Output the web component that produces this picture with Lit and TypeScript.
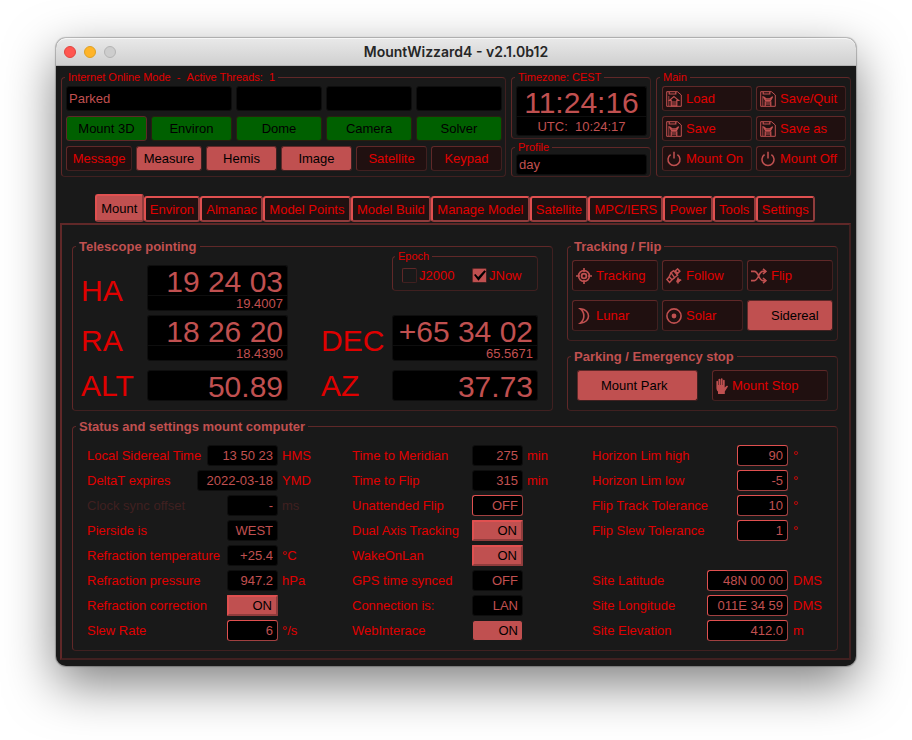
import { LitElement, html, svg, css, nothing } from "lit";
import { customElement, property, state } from "lit/decorators.js";
import { classMap } from "lit/directives/class-map.js";

const floppyFrame = svg`
  <path d="M.7 .7H11.4L15.3 4V15.3H.7Z" />
  <path d="M3.2 1V3H9.8V1" stroke-width="1.2" />
  <path d="M2.8 15V5" stroke-width="0.8" />`;

const icons: Record<string, unknown> = {
  load: svg`${floppyFrame}
    <path d="M8 5.6 12.6 9.4H10.8V14.8H5.2V9.4H3.4Z" stroke-width="1.2" />
    <path d="M5.5 11H10.5M5.5 13H10.5" />`,
  save: svg`${floppyFrame}
    <path d="M3.4 5.6 6 7.8H10L12.6 5.6 10.6 9.4H5.4Z" stroke-width="1.2" />
    <path d="M5.2 15V10.8H10.8V15M5.5 13H10.5" stroke-width="1.2" />`,
  power: svg`
    <path d="M4.6 3.6A6 6 0 1 0 11.4 3.6" stroke-width="1.5" />
    <path d="M8 .8V7.4" stroke-width="1.5" />`,
  target: svg`
    <circle cx="8" cy="8" r="5.4" stroke-width="1.6" />
    <circle cx="8" cy="8" r="2.4" stroke-width="1.8" />
    <path d="M8 0V4M8 12V16M0 8H4M12 8H16" stroke-width="1.6" />`,
  satellite: svg`
    <path d="M9.2 3 11.6 .9 13.8 3.2 11.6 5.4Z" stroke-width="1.5" />
    <path d="M5 4.6 7.6 2.6 11.6 7.2 8.6 9.6Z" stroke-width="1.4" />
    <path d="M.9 11.4 3.2 8.8 6 11.8 3.6 14.4Z" stroke-width="1.5" />
    <path d="M5 4.6 3.2 8.8M6 11.8 8.6 9.6M12 9.4V15.4M10.4 13.8 15.2 11.8" stroke-width="1.5" />
    <circle cx="12.4" cy="12.4" r="1.8" class="solid" />`,
  shuffle: svg`
    <path d="M0 3.4H3.4C7.6 3.4 7.6 12.6 11.8 12.6H15M0 12.6H3.4C7.6 12.6 7.6 3.4 11.8 3.4H15" stroke-width="1.6" />
    <path d="M12 .8 15 3.4 12 6M12 10 15 12.6 12 15.2" stroke-width="1.6" />`,
  moon: svg`<path d="M4.4 .9C15.2 1.4 15.2 14.6 4.4 15.1 9 11.4 9 4.6 4.4 .9Z" stroke-width="1.6" />`,
  sun: svg`
    <circle cx="8" cy="8" r="7.1" stroke-width="1.6" />
    <circle cx="8" cy="8" r="2.4" class="solid" />`,
  hand: svg`
    <path class="solid" d="M1.4 3.4C1.4 2.4 3 2.4 3 3.4V7H3.5V1.6C3.5 .5 5.3 .5 5.3 1.6V7H5.8V1.2C5.8 0 7.6 0 7.6 1.2V7H8V2.6C8 1.5 9.7 1.5 9.7 2.6V9.4L11.4 7.9C12.6 7.2 13.4 8 12.8 8.8L9.8 13.4V16H3V13.6C1.6 12.4 1.4 11 1.4 9Z" />`,
};

@customElement("icon-button")
class IconButton extends LitElement {
  @property() icon = "";
  @property() label = "";
  @property({ type: Boolean }) active = false;

  static styles = css`
    :host {
      display: grid;
    }
    button {
      display: flex;
      align-items: center;
      gap: 4px;
      min-width: 0;
      padding: 0 3px;
      border: 1px solid;
      border-color: #602828 #402020 #402020 #602828;
      border-radius: 3px;
      background: #201010;
      color: #e00000;
      font: 13px/15px "Liberation Sans", Arial, sans-serif;
      white-space: nowrap;
    }
    .active {
      background: #c05050;
      color: #000;
    }
    svg {
      flex: none;
      width: 16px;
      height: 16px;
      fill: none;
      stroke: #c05050;
    }
    .narrow {
      width: 12px;
    }
    .solid {
      fill: #c05050;
      stroke: none;
    }
  `;

  render() {
    const narrow = this.icon === "hand";
    return html`<button
      class=${classMap({ active: this.active })}
      aria-pressed=${this.active}
    >
      <svg
        class=${classMap({ narrow })}
        viewBox=${narrow ? "1 0 12 16" : "0 0 16 16"}
        aria-hidden="true"
      >
        ${icons[this.icon] ?? nothing}
      </svg>
      ${this.label}
    </button>`;
  }
}

type Kind = "show" | "edit" | "toggle" | "flat";

interface Setting {
  label: string;
  value: string;
  unit?: string;
  kind?: Kind;
  size?: "medium" | "large";
  off?: boolean;
}

const mountSettings: (Setting | null)[][] = [
  [
    { label: "Local Sidereal Time", value: "13 50 23", unit: "HMS", size: "medium" },
    { label: "DeltaT expires", value: "2022-03-18", unit: "YMD", size: "large" },
    { label: "Clock sync offset", value: "-", unit: "ms", off: true },
    { label: "Pierside is", value: "WEST" },
    { label: "Refraction temperature", value: "+25.4", unit: "°C" },
    { label: "Refraction pressure", value: "947.2", unit: "hPa" },
    { label: "Refraction correction", value: "ON", kind: "toggle" },
    { label: "Slew Rate", value: "6", unit: "°/s", kind: "edit" },
  ],
  [
    { label: "Time to Meridian", value: "275", unit: "min" },
    { label: "Time to Flip", value: "315", unit: "min" },
    { label: "Unattended Flip", value: "OFF", kind: "edit" },
    { label: "Dual Axis Tracking", value: "ON", kind: "toggle" },
    { label: "WakeOnLan", value: "ON", kind: "toggle" },
    { label: "GPS time synced", value: "OFF" },
    { label: "Connection is:", value: "LAN" },
    { label: "WebInterace", value: "ON", kind: "flat" },
  ],
  [
    { label: "Horizon Lim high", value: "90", unit: "°", kind: "edit" },
    { label: "Horizon Lim low", value: "-5", unit: "°", kind: "edit" },
    { label: "Flip Track Tolerance", value: "10", unit: "°", kind: "edit" },
    { label: "Flip Slew Tolerance", value: "1", unit: "°", kind: "edit" },
    null,
    { label: "Site Latitude", value: "48N 00 00", unit: "DMS", kind: "edit", size: "large" },
    { label: "Site Longitude", value: "011E 34 59", unit: "DMS", kind: "edit", size: "large" },
    { label: "Site Elevation", value: "412.0", unit: "m", kind: "edit", size: "large" },
  ],
];

const tabs = [
  "Mount", "Environ", "Almanac", "Model Points", "Model Build", "Manage Model",
  "Satellite", "MPC/IERS", "Power", "Tools", "Settings",
];

@customElement("app-root")
class AppRoot extends LitElement {
  @state() private tab = "Mount";

  static styles = css`
    :host {
      display: block;
      box-sizing: border-box;
      padding: 38px 56px 74px;
      background: #fff;
      color: #e00000;
      font: 13px/15px "Liberation Sans", Arial, sans-serif;
      overflow: hidden;
    }
    *,
    *::before,
    *::after {
      box-sizing: border-box;
    }
    .window {
      border-radius: 10px;
      background: #191919;
      box-shadow:
        0 0 1px 1px rgba(0, 0, 0, 0.25),
        0 18px 50px rgba(0, 0, 0, 0.5);
    }
    .titlebar {
      display: grid;
      grid-template-columns: 1fr auto 1fr;
      align-items: center;
      height: 28px;
      padding: 0 8px;
      border-bottom: 1px solid #b4b4b4;
      border-radius: 10px 10px 0 0;
      background: linear-gradient(#e9e9e9, #d0d0d0);
      box-shadow: inset 0 1px #f6f6f6;
    }
    .lights {
      display: flex;
      gap: 8px;
    }
    .light {
      width: 12px;
      height: 12px;
      padding: 0;
      border: 1px solid #b4b4b4;
      border-radius: 50%;
      background: #cdcdcd;
    }
    .close {
      border-color: #e0443e;
      background: #ff5650;
    }
    .minimize {
      border-color: #dea123;
      background: #ffb429;
    }
    h1 {
      margin: 0;
      color: #262626;
      font: 600 14px/16px Inter, sans-serif;
    }
    main {
      padding: 5px 5px 6px 4px;
    }
    fieldset {
      --inset: 4px;
      min-width: 0;
      margin: 0;
      padding: 2px 3px 5px var(--inset);
      border: 1px solid;
      border-color: #602828 #402020 #402020 #602828;
      border-radius: 4px;
    }
    legend {
      margin-left: calc(3px - var(--inset));
      padding: 0 3px;
      font-size: 11px;
      line-height: 13px;
    }
    .section > legend {
      color: #c05050;
      font-size: 13px;
      font-weight: bold;
      line-height: 15px;
    }
    .header {
      display: grid;
      grid-template-columns: 445fr 140fr 195fr;
      gap: 5px;
      padding-left: 1px;
    }
    .stack {
      display: grid;
      align-content: start;
      gap: 5px;
    }
    .devices {
      display: grid;
      grid-template-columns: 81fr 81fr 86fr 86fr 86fr;
      gap: 5px 4px;
    }
    .windows {
      display: grid;
      grid-template-columns: 66fr 66fr 71fr 71fr 71fr 71fr;
      gap: 4px;
    }
    .wide {
      grid-column: span 2;
    }
    input,
    button {
      min-width: 0;
      margin: 0;
      font: inherit;
    }
    .field {
      height: 25px;
      padding: 0 2px;
      border: 1px solid #0e0e0e;
      border-radius: 3px;
      background: #000;
      color: #c05050;
    }
    .push {
      height: 25px;
      padding: 0;
      border: 1px solid;
      border-color: #602828 #402020 #402020 #602828;
      border-radius: 3px;
      background: #201010;
      color: #e00000;
      white-space: nowrap;
    }
    .on {
      background: #c05050;
      color: #000;
    }
    .ready {
      border-color: #282010;
      background: #006000;
      color: #000;
    }
    .chosen {
      border-color: #602828;
    }
    .times {
      display: grid;
      align-content: space-between;
    }
    .times fieldset {
      display: grid;
      padding: 2px 3px 2px 4px;
    }
    .times .profile {
      padding: 0 3px 1px 4px;
    }
    .profile .field,
    .row .field {
      height: 21px;
    }
    output {
      display: block;
      border: 1px solid #0e0e0e;
      border-radius: 3px;
      background: #000;
      color: #c05050;
      white-space: pre;
    }
    .big {
      height: 31px;
      font-size: 30px;
      line-height: 31px;
    }
    .top {
      height: 30px;
      border-bottom: 0;
      border-radius: 3px 3px 0 0;
    }
    .small {
      height: 16px;
      border-radius: 0 0 3px 3px;
      line-height: 16px;
    }
    .centred {
      height: 20px;
      line-height: 20px;
      text-align: center;
    }
    .clock {
      text-align: center;
    }
    .main {
      --inset: 5px;
      padding-right: 4px;
    }
    .actions {
      display: grid;
      grid-template-columns: 1fr 1fr;
      grid-auto-rows: 25px;
      gap: 5px 4px;
    }
    .tabs {
      display: flex;
      align-items: flex-end;
      height: 28px;
      margin: 17px 0 1px;
      padding: 0 36px 0 35px;
    }
    .tab {
      flex: 1 0 auto;
      height: 26px;
      padding: 0 3px;
      border: 2px solid;
      border-color: #e05050 #903c3c #903c3c #e05050;
      border-radius: 3px;
      background: #201010;
      color: #e00000;
      white-space: nowrap;
    }
    .current {
      height: 28px;
      background: #c05050;
      color: #000;
    }
    .pane {
      display: grid;
      grid-template-columns: 481fr 271fr;
      gap: 8px 14px;
      padding: 14px 11px 7px 10px;
      border: 2px solid;
      border-color: #602828 #402020 #402020 #602828;
    }
    .pointing {
      --inset: 8px;
      padding: 11px 14px 9px 8px;
    }
    .axes {
      display: grid;
      grid-template-columns: 66px 141fr 33px 71px 146fr;
      align-items: center;
    }
    .axes.paired {
      margin-bottom: 4px;
    }
    .axes.single {
      margin-top: 9px;
    }
    .axis {
      font-size: 30px;
      line-height: 31px;
    }
    .lowered {
      padding-top: 4px;
    }
    .reading output {
      padding-right: 4px;
      text-align: right;
    }
    .second {
      grid-column: 4;
    }
    .epoch {
      --inset: 9px;
      display: flex;
      grid-column: 5;
      align-self: start;
      height: 41px;
      margin-top: -15px;
      padding: 4px 0 0 9px;
    }
    .epoch legend {
      margin-left: -7px;
    }
    .option {
      display: flex;
      flex: 0 0 70px;
      align-items: center;
      gap: 2px;
      height: 17px;
    }
    .tick {
      flex: none;
      width: 15px;
      height: 15px;
      border: 1px solid;
      border-color: #602828 #402020 #402020 #602828;
      border-radius: 2px;
      appearance: none;
    }
    .tick:checked {
      background: #c05050;
    }
    .tick:checked::after {
      display: block;
      width: 13px;
      height: 13px;
      background: #000;
      clip-path: polygon(8% 46%, 18% 38%, 40% 62%, 88% 10%, 100% 20%, 42% 90%);
      content: "";
    }
    .side {
      display: grid;
      gap: 8px;
    }
    .tracking {
      display: grid;
      grid-template-columns: 86fr 81fr 86fr;
      grid-auto-rows: 31px;
      gap: 9px 4px;
      padding: 6px 4px 9px;
    }
    .parking {
      --inset: 9px;
      display: grid;
      grid-template-columns: 121fr 116fr;
      grid-auto-rows: 31px;
      gap: 14px;
      padding: 6px 9px 9px;
    }
    .status {
      --inset: 14px;
      display: grid;
      grid-column: span 2;
      grid-template-columns: 265fr 240fr 231fr;
      padding: 11px 14px 9px;
    }
    .column {
      display: grid;
      grid-auto-rows: 21px;
      gap: 4px;
      align-content: start;
    }
    .row {
      display: grid;
      grid-template-columns: 1fr auto 70px;
      align-items: center;
      gap: 4px;
      white-space: nowrap;
    }
    .column:nth-of-type(2) .row {
      grid-template-columns: 1fr auto 65px;
    }
    .column:nth-of-type(3) .row {
      grid-template-columns: 1fr auto 30px;
      gap: 5px;
    }
    .row .field {
      width: 51px;
      padding: 0 4px;
      text-align: right;
    }
    .row .medium {
      width: 71px;
    }
    .row .large {
      width: 81px;
    }
    .row .edit {
      border-color: #e05050 #a04040 #a04040 #e05050;
    }
    .row .toggle {
      border: 2px solid;
      border-color: #e05050 #903c3c #903c3c #e05050;
      border-radius: 1px;
      background: #c05050;
      color: #000;
    }
    .row .flat {
      border-color: #191919;
      background: #c05050;
      color: #000;
    }
    .off {
      color: #402020;
    }
  `;

  private reading(axis: string, value: string, detail?: string, second = false) {
    return html`
      <span class=${classMap({ axis: true, second, lowered: !!detail })}>${axis}</span>
      <div class="reading">
        <output class=${classMap({ big: true, top: !!detail })}>${value}</output>
        ${detail ? html`<output class="small">${detail}</output>` : nothing}
      </div>
    `;
  }

  private setting(item: Setting | null, column: number, index: number) {
    if (!item) return html`<div></div>`;
    const kind = item.kind ?? "show";
    const id = `setting-${column}-${index}`;
    const classes = classMap({ field: true, [kind]: true, [item.size ?? "regular"]: true });
    return html`
      <div class=${classMap({ row: true, off: !!item.off })}>
        <label for=${id}>${item.label}</label>
        ${kind === "toggle" || kind === "flat"
          ? html`<button id=${id} class=${classes} aria-pressed="true">${item.value}</button>`
          : html`<input id=${id} class=${classes} .value=${item.value} ?readonly=${kind === "show"} />`}
        <span>${item.unit ?? nothing}</span>
      </div>
    `;
  }

  render() {
    return html`
      <div class="window">
        <header class="titlebar">
          <div class="lights">
            <button class="light close" aria-label="Close"></button>
            <button class="light minimize" aria-label="Minimize"></button>
            <button class="light" aria-label="Zoom" disabled></button>
          </div>
          <h1>MountWizzard4 - v2.1.0b12</h1>
        </header>
        <main>
          <div class="header">
            <fieldset class="stack">
              <legend>Internet Online Mode &nbsp;- &nbsp;Active Threads: &nbsp;1</legend>
              <div class="devices">
                <input class="field wide" aria-label="Mount state" value="Parked" readonly />
                <input class="field" aria-label="Dome state" readonly />
                <input class="field" aria-label="Camera state" readonly />
                <input class="field" aria-label="Solver state" readonly />
                <button class="push ready chosen">Mount 3D</button>
                ${["Environ", "Dome", "Camera", "Solver"].map(
                  (name) => html`<button class="push ready">${name}</button>`
                )}
              </div>
              <div class="windows">
                ${["Message", "Measure", "Hemis", "Image", "Satellite", "Keypad"].map(
                  (name, i) => html`<button class=${classMap({ push: true, on: i > 0 && i < 4 })}>${name}</button>`
                )}
              </div>
            </fieldset>
            <div class="times">
              <fieldset>
                <legend>Timezone: CEST</legend>
                <output class="big top clock">11:24:16</output>
                <output class="small centred">UTC:  10:24:17</output>
              </fieldset>
              <fieldset class="profile">
                <legend>Profile</legend>
                <input class="field" aria-label="Profile" value="day" readonly />
              </fieldset>
            </div>
            <fieldset class="main">
              <legend>Main</legend>
              <div class="actions">
                <icon-button icon="load" label="Load"></icon-button>
                <icon-button icon="save" label="Save/Quit"></icon-button>
                <icon-button icon="save" label="Save"></icon-button>
                <icon-button icon="save" label="Save as"></icon-button>
                <icon-button icon="power" label="Mount On"></icon-button>
                <icon-button icon="power" label="Mount Off"></icon-button>
              </div>
            </fieldset>
          </div>
          <div class="tabs" role="tablist">
            ${tabs.map(
              (name) => html`<button
                role="tab"
                class=${classMap({ tab: true, current: name === this.tab })}
                aria-selected=${name === this.tab}
                @click=${() => (this.tab = name)}
              >${name}</button>`
            )}
          </div>
          <div class="pane" role="tabpanel">
            <fieldset class="section pointing">
              <legend>Telescope pointing</legend>
              <div class="axes paired">
                ${this.reading("HA", "19 24 03", "19.4007")}
                <fieldset class="epoch">
                  <legend>Epoch</legend>
                  <label class="option"><input class="tick" type="checkbox" />J2000</label>
                  <label class="option"><input class="tick" type="checkbox" checked />JNow</label>
                </fieldset>
              </div>
              <div class="axes">
                ${this.reading("RA", "18 26 20", "18.4390")}
                ${this.reading("DEC", "+65 34 02", "65.5671", true)}
              </div>
              <div class="axes single">
                ${this.reading("ALT", "50.89")}
                ${this.reading("AZ", "37.73", undefined, true)}
              </div>
            </fieldset>
            <div class="side">
              <fieldset class="section tracking">
                <legend>Tracking / Flip</legend>
                <icon-button icon="target" label="Tracking"></icon-button>
                <icon-button icon="satellite" label="Follow"></icon-button>
                <icon-button icon="shuffle" label="Flip"></icon-button>
                <icon-button icon="moon" label="Lunar"></icon-button>
                <icon-button icon="sun" label="Solar"></icon-button>
                <icon-button label="Sidereal" active></icon-button>
              </fieldset>
              <fieldset class="section parking">
                <legend>Parking / Emergency stop</legend>
                <icon-button label="Mount Park" active></icon-button>
                <icon-button icon="hand" label="Mount Stop"></icon-button>
              </fieldset>
            </div>
            <fieldset class="section status">
              <legend>Status and settings mount computer</legend>
              ${mountSettings.map(
                (items, column) => html`<div class="column">
                  ${items.map((item, index) => this.setting(item, column, index))}
                </div>`
              )}
            </fieldset>
          </div>
        </main>
      </div>
    `;
  }
}
